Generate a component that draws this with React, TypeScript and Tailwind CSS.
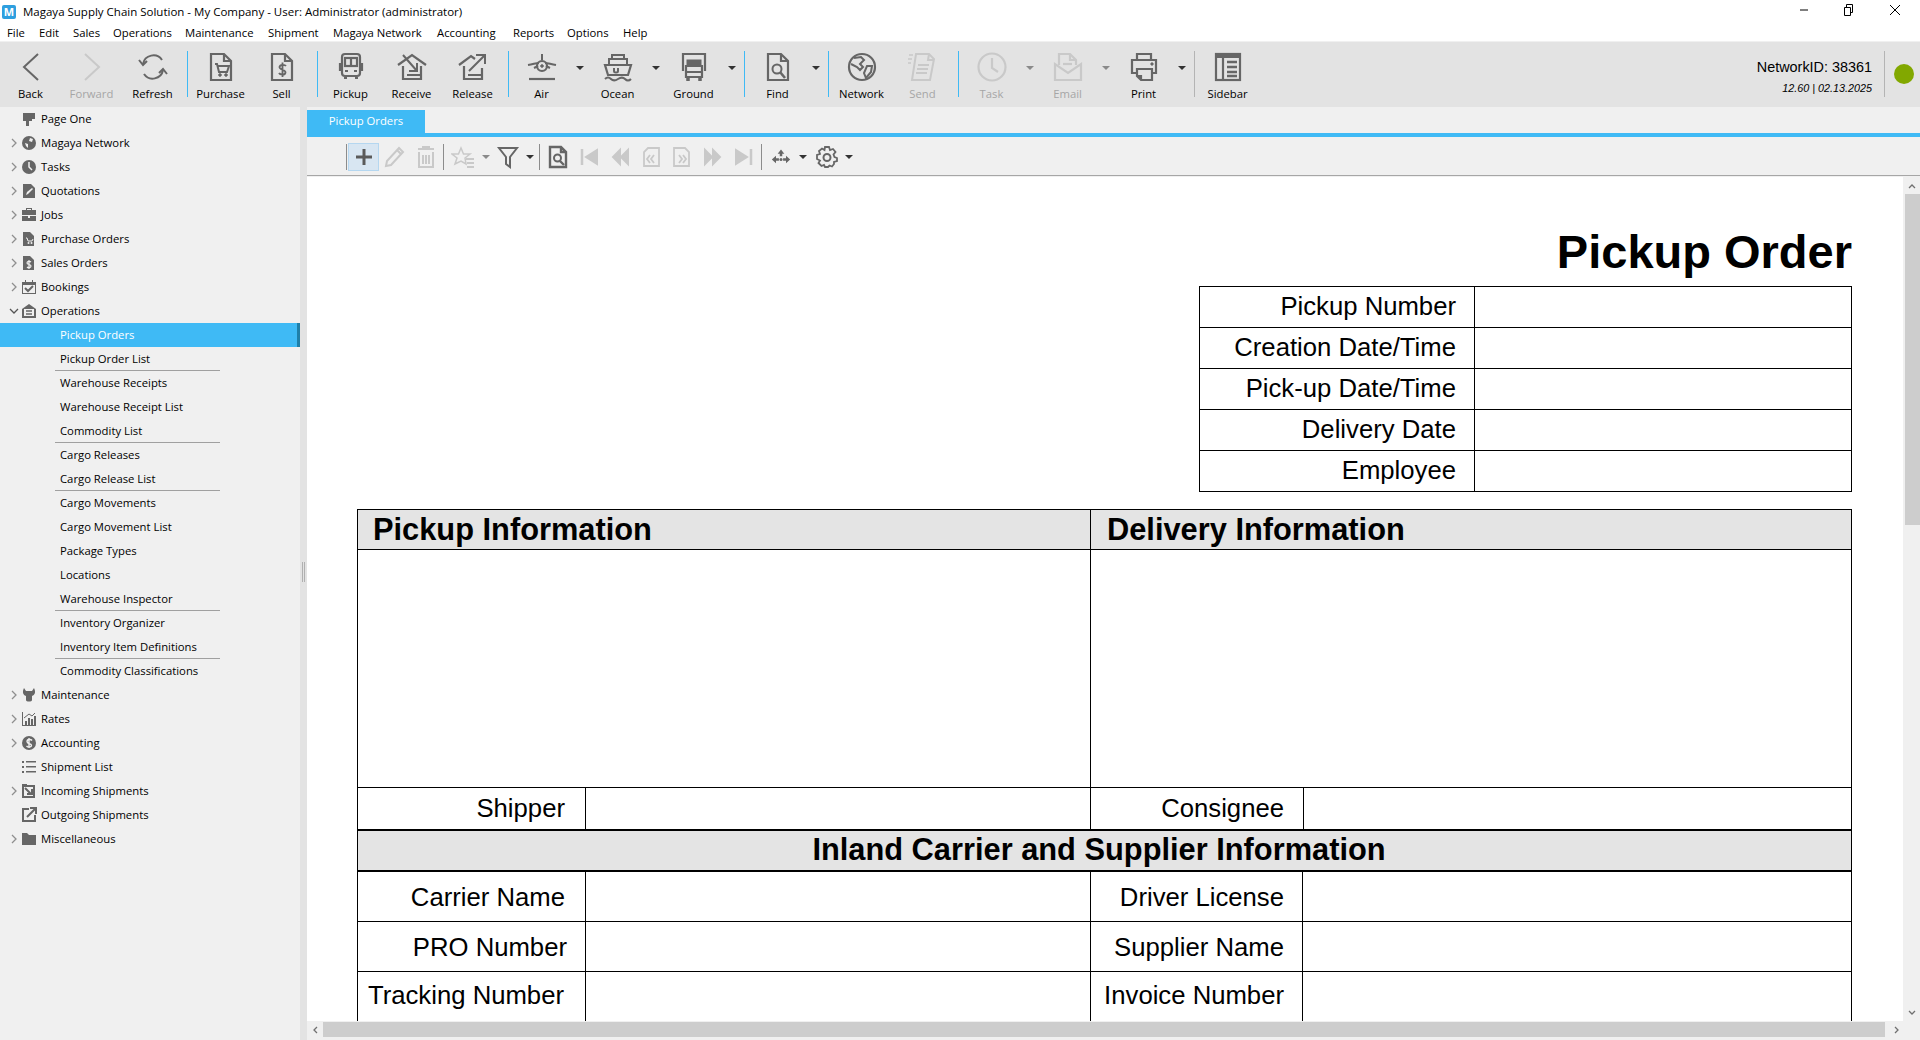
import React from 'react';

const ui = "font-['Open_Sans',sans-serif] text-[11.3px]";
const doc = "font-['Liberation_Sans',Arial,sans-serif]";

const G = '#666666';
const D = '#c9c9c9';

function I32({ c = G, children }: { c?: string; children: React.ReactNode }) {
  return (
    <svg width="32" height="32" viewBox="0 0 32 32" fill="none" stroke={c} strokeWidth="2.2">
      {children}
    </svg>
  );
}

const page = <path d="M6 3H19L26 10V29H6ZM19 3V10H26" />;

const toolIcons: Record<string, (c?: string) => React.ReactNode> = {
  back: c => <I32 c={c}><path d="M23 3L9 16L23 29" strokeWidth="2" /></I32>,
  forward: c => <I32 c={c}><path d="M9 3L23 16L9 29" strokeWidth="2" /></I32>,
  refresh: c => (
    <I32 c={c}>
      <path d="M6 13A10.5 10.5 0 0 1 25 9" strokeWidth="2" />
      <path d="M26 19A10.5 10.5 0 0 1 7 23" strokeWidth="2" />
      <path d="M2 9L6 14L10 10M22 22L26 18L30 23" strokeWidth="2" />
    </I32>
  ),
  purchase: c => (
    <I32 c={c}>
      {page}
      <path d="M10 13H12L14 21H22L24 15H13" strokeWidth="2" />
      <circle cx="15" cy="24" r="1.3" fill={c} strokeWidth="1" />
      <circle cx="21" cy="24" r="1.3" fill={c} strokeWidth="1" />
    </I32>
  ),
  sell: c => (
    <I32 c={c}>
      {page}
      <path d="M20 15C19 13.5 14 13 13.5 16S20 18.5 19.5 21.5 14 24 13 22M16.5 11.5V26" strokeWidth="1.8" />
    </I32>
  ),
  pickup: c => (
    <I32 c={c}>
      <rect x="7" y="3" width="18" height="22" rx="3" />
      <rect x="10" y="7" width="12" height="8" />
      <path d="M16 7V15M5 12V20M27 12V20M9 27H12M20 27H23" />
      <path d="M10 20H13M19 20H22" strokeWidth="2" />
    </I32>
  ),
  receive: c => (
    <I32 c={c}>
      <path d="M2 14L16 4L30 14M7 15V28H25V15M11 24H25" />
      <path d="M7 4L21 20M21 12V20H13" strokeWidth="2" />
    </I32>
  ),
  release: c => (
    <I32 c={c}>
      <path d="M2 14L14 5L18 8M7 15V28H25V17M11 24H25" />
      <path d="M12 20L27 5M19 4H28V13" strokeWidth="2" />
    </I32>
  ),
  air: c => (
    <I32 c={c}>
      <path d="M2 14C8 13 10 12 13 12M19 12C22 12 24 13 30 14M8 17L12 15M24 17L20 15" strokeWidth="2" />
      <path d="M16 3V9" strokeWidth="2" />
      <circle cx="16" cy="15" r="5" />
      <circle cx="16" cy="15" r="1.3" fill={c} strokeWidth="1" />
      <path d="M3 28H29" />
    </I32>
  ),
  ocean: c => (
    <I32 c={c}>
      <path d="M3 14H29L26 24H6Z" />
      <path d="M7 14V8H25V14M10 8V4H22V8M12 17V20C12 22 16 22 16 20V17" strokeWidth="2" />
      <path d="M3 28C5 26 7 26 9 28S13 30 16 28S21 26 23 28S27 30 29 28" strokeWidth="2" />
    </I32>
  ),
  ground: c => (
    <I32 c={c}>
      <path d="M5 20V3H27V20" />
      <rect x="9" y="9" width="14" height="5" fill={c} strokeWidth="1" />
      <path d="M8 15H24V26H8ZM8 21H24" />
      <path d="M10 26V30M22 26V30" strokeWidth="3.5" />
    </I32>
  ),
  find: c => (
    <I32 c={c}>
      {page}
      <circle cx="15" cy="18" r="4.5" strokeWidth="2" />
      <path d="M18 21L23 27" strokeWidth="2.6" />
    </I32>
  ),
  network: c => (
    <I32 c={c}>
      <circle cx="16" cy="16" r="13" />
      <path d="M8 7L15 6L18 9L14 13L17 16L14 19L11 16L5 13M21 15L26 15L25 21L20 27L18 22Z" strokeWidth="2" />
    </I32>
  ),
  send: c => (
    <I32 c={c}>
      <path d="M9 3H22L27 8L23 29H5ZM22 3L21 9H27M11 14H22M10 18H21M9 22H20" strokeWidth="2" />
      <path d="M2 4H6M1 8H5M1 12H4" strokeWidth="1.5" />
    </I32>
  ),
  task: c => (
    <I32 c={c}>
      <circle cx="16" cy="16" r="13.5" />
      <path d="M16 7V17L22 21" />
    </I32>
  ),
  email: c => (
    <I32 c={c}>
      <path d="M7 14V3H18L24 9V14M18 3V9H24M3 13V29H29V13L16 22Z" />
      <path d="M11 13H20" />
    </I32>
  ),
  print: c => (
    <I32 c={c}>
      <path d="M9 9V3H23V9M9 22H4V9H28V22H24" />
      <path d="M9 18H24V29H13L9 25ZM13 29V25H9" />
      <circle cx="24" cy="13" r="1.2" fill={c} strokeWidth="1" />
    </I32>
  ),
  sidebar: c => (
    <I32 c={c}>
      <rect x="4" y="3" width="24" height="26" />
      <path d="M4 5H28" strokeWidth="4" />
      <path d="M11 7V29" />
      <path d="M15 11H25M15 16H25M15 21H25M15 25H25" strokeWidth="2.5" />
    </I32>
  ),
};

type ToolItem =
  | { kind: 'btn'; icon: string; label: string; off?: boolean; caret?: boolean }
  | { kind: 'sep'; gray?: boolean; first?: boolean };

const tools: ToolItem[] = [
  { kind: 'btn', icon: 'back', label: 'Back' },
  { kind: 'btn', icon: 'forward', label: 'Forward', off: true },
  { kind: 'btn', icon: 'refresh', label: 'Refresh' },
  { kind: 'sep', first: true },
  { kind: 'btn', icon: 'purchase', label: 'Purchase' },
  { kind: 'btn', icon: 'sell', label: 'Sell' },
  { kind: 'sep' },
  { kind: 'btn', icon: 'pickup', label: 'Pickup' },
  { kind: 'btn', icon: 'receive', label: 'Receive' },
  { kind: 'btn', icon: 'release', label: 'Release' },
  { kind: 'sep' },
  { kind: 'btn', icon: 'air', label: 'Air', caret: true },
  { kind: 'btn', icon: 'ocean', label: 'Ocean', caret: true },
  { kind: 'btn', icon: 'ground', label: 'Ground', caret: true },
  { kind: 'sep' },
  { kind: 'btn', icon: 'find', label: 'Find', caret: true },
  { kind: 'sep' },
  { kind: 'btn', icon: 'network', label: 'Network' },
  { kind: 'btn', icon: 'send', label: 'Send', off: true },
  { kind: 'sep' },
  { kind: 'btn', icon: 'task', label: 'Task', off: true, caret: true },
  { kind: 'btn', icon: 'email', label: 'Email', off: true, caret: true },
  { kind: 'btn', icon: 'print', label: 'Print', caret: true },
  { kind: 'sep', gray: true },
  { kind: 'btn', icon: 'sidebar', label: 'Sidebar' },
];

function Caret({ off }: { off?: boolean }) {
  return (
    <span
      className={
        'h-0 w-0 border-x-[4px] border-t-[4px] border-x-transparent ' +
        (off ? 'border-t-[#8a8a8a]' : 'border-t-[#333333]')
      }
    />
  );
}

function Toolbar() {
  return (
    <div className={`flex h-[65px] items-start bg-[#e3e3e3] ${ui}`}>
      {tools.map((t, i) =>
        t.kind === 'sep' ? (
          <div
            key={i}
            className={
              'mt-[9px] mr-[2px] h-[46px] w-px ' +
              (t.first ? 'ml-[4px] ' : 'ml-[5px] ') +
              (t.gray ? 'bg-[#b4b4b4]' : 'bg-[#3fbaf5]')
            }
          />
        ) : (
          <div key={i} className="flex">
            <div className="flex w-[61px] flex-col items-center pt-[9px]">
              <div className="h-[32px]">{toolIcons[t.icon](t.off ? D : G)}</div>
              <span className={'leading-[22px] ' + (t.off ? 'text-[#a6a6a6]' : 'text-black')}>{t.label}</span>
            </div>
            {t.caret && (
              <div className="flex h-[50px] w-[15px] items-center justify-center pt-[1px]">
                <Caret off={t.off} />
              </div>
            )}
          </div>
        ),
      )}
      <div className="ml-auto flex h-full">
        <div className="flex flex-col items-end pr-[12px] pt-[15px] text-black">
          <span className="font-['Liberation_Sans',sans-serif] text-[14.4px] leading-[20px]">NetworkID: 38361</span>
          <span className="mt-[4px] font-['Liberation_Sans',sans-serif] text-[10.8px] italic leading-[14px]">
            12.60 | 02.13.2025
          </span>
        </div>
        <div className="mt-[9px] h-[46px] w-px bg-[#b4b4b4]" />
        <div className="ml-[9px] mr-[6px] mt-[22px] h-[20px] w-[20px] rounded-full bg-[#82a800]" />
      </div>
    </div>
  );
}

const menus = [
  ['File', 'w-[32px]'],
  ['Edit', 'w-[34px]'],
  ['Sales', 'w-[40px]'],
  ['Operations', 'w-[72px]'],
  ['Maintenance', 'w-[83px]'],
  ['Shipment', 'w-[65px]'],
  ['Magaya Network', 'w-[104px]'],
  ['Accounting', 'w-[76px]'],
  ['Reports', 'w-[54px]'],
  ['Options', 'w-[56px]'],
  ['Help', 'w-[40px]'],
];

function S16({ children }: { children: React.ReactNode }) {
  return (
    <svg width="16" height="16" viewBox="0 0 16 16" fill="#666666" stroke="none">
      {children}
    </svg>
  );
}

const sideIcons: Record<string, React.ReactNode> = {
  page: <S16><path d="M2 2H14V8H11V10H8V15H5V10H2Z" /></S16>,
  globe: <S16><circle cx="8" cy="8" r="7" /><path d="M9 3L12 4L11 7L8 6ZM4 8L7 9L7 13L5 11Z" fill="#f0f0f0" /></S16>,
  clock: <S16><circle cx="8" cy="8" r="7" /><path d="M8 3V8L11 11" fill="none" stroke="#f0f0f0" strokeWidth="1.5" /></S16>,
  quote: <S16><path d="M2 1H10L14 5V15H2Z" /><path d="M5 12L6 9L11 5L12 6L7 11Z" fill="#f0f0f0" /></S16>,
  jobs: <S16><path d="M5 3V1H11V3H15V8H1V3ZM6 3H10V2H6ZM1 9H7V11H9V9H15V14H1Z" /></S16>,
  cart: <S16><path d="M2 1H9L13 5V15H2Z" /><path d="M5 7H6L7 10H11L12 8" fill="none" stroke="#f0f0f0" /><circle cx="7.5" cy="12" r="1" fill="#f0f0f0" /><circle cx="10.5" cy="12" r="1" fill="#f0f0f0" /></S16>,
  dollarDoc: <S16><path d="M2 1H9L13 5V15H2Z" /><path d="M10 7C9 6 6 6 6 8S10 9 10 11S7 13 6 12M8 5V14" fill="none" stroke="#f0f0f0" strokeWidth="1.2" /></S16>,
  calendar: <S16><path d="M1 3H4V1H5V3H11V1H12V3H15V15H1Z" /><path d="M2 6H14V14H2Z" fill="#f0f0f0" /><path d="M4 9L7 12L12 7" fill="none" stroke="#666666" strokeWidth="2" /></S16>,
  ops: <S16><path d="M1 6L8 1L15 6V15H1Z" /><path d="M3 6H13V13H3Z" fill="#f0f0f0" /><path d="M5 8H11M5 11H11" stroke="#666666" strokeWidth="1.5" /></S16>,
  wrench: <S16><path d="M3 1C1 5 2 8 5 9V13C5 15 11 15 11 13V9C14 8 15 5 13 1L11 4H5Z" /></S16>,
  rates: <S16><path d="M1 1V15H15V14H2V1Z" /><path d="M4 10H6V14H4ZM7 7H9V14H7ZM10 8H12V14H10ZM13 5H15V14H13Z" /><path d="M3 7L8 3L11 5L14 2" fill="none" stroke="#666666" /></S16>,
  dollar: <S16><circle cx="8" cy="8" r="7" /><path d="M11 5.5C10 4 6 4 6 6.5S10.5 8.5 10.5 10.5S7 12.5 5.5 11M8 3V13" fill="none" stroke="#f0f0f0" strokeWidth="1.4" /></S16>,
  list: <S16><path d="M1 2H3V4H1ZM5 2H15V3.5H5ZM1 7H3V9H1ZM5 7H15V8.5H5ZM1 12H3V14H1ZM5 12H15V13.5H5Z" /></S16>,
  incoming: <S16><path d="M1 2H14V15H1Z" /><path d="M3 4H12V13H3Z" fill="#f0f0f0" /><path d="M4 5L10 11M11 6V11H6" fill="none" stroke="#666666" strokeWidth="2" /><path d="M1 1H6V3H1Z" /></S16>,
  outgoing: <S16><path d="M8 2H2V14H14V8" fill="none" stroke="#666666" strokeWidth="2" /><path d="M6 10L14 2M9 1H15V7" fill="none" stroke="#666666" strokeWidth="2" /></S16>,
  folder: <S16><path d="M1 2H6L8 4H15V14H1Z" /></S16>,
};

type SideRow = { label: string; icon?: string; arrow?: 'right' | 'down'; child?: boolean; line?: boolean; active?: boolean };

const sideRows: SideRow[] = [
  { label: 'Page One', icon: 'page' },
  { label: 'Magaya Network', icon: 'globe', arrow: 'right' },
  { label: 'Tasks', icon: 'clock', arrow: 'right' },
  { label: 'Quotations', icon: 'quote', arrow: 'right' },
  { label: 'Jobs', icon: 'jobs', arrow: 'right' },
  { label: 'Purchase Orders', icon: 'cart', arrow: 'right' },
  { label: 'Sales Orders', icon: 'dollarDoc', arrow: 'right' },
  { label: 'Bookings', icon: 'calendar', arrow: 'right' },
  { label: 'Operations', icon: 'ops', arrow: 'down' },
  { label: 'Pickup Orders', child: true, active: true },
  { label: 'Pickup Order List', child: true, line: true },
  { label: 'Warehouse Receipts', child: true },
  { label: 'Warehouse Receipt List', child: true },
  { label: 'Commodity List', child: true, line: true },
  { label: 'Cargo Releases', child: true },
  { label: 'Cargo Release List', child: true, line: true },
  { label: 'Cargo Movements', child: true },
  { label: 'Cargo Movement List', child: true },
  { label: 'Package Types', child: true },
  { label: 'Locations', child: true },
  { label: 'Warehouse Inspector', child: true, line: true },
  { label: 'Inventory Organizer', child: true },
  { label: 'Inventory Item Definitions', child: true, line: true },
  { label: 'Commodity Classifications', child: true },
  { label: 'Maintenance', icon: 'wrench', arrow: 'right' },
  { label: 'Rates', icon: 'rates', arrow: 'right' },
  { label: 'Accounting', icon: 'dollar', arrow: 'right' },
  { label: 'Shipment List', icon: 'list' },
  { label: 'Incoming Shipments', icon: 'incoming', arrow: 'right' },
  { label: 'Outgoing Shipments', icon: 'outgoing' },
  { label: 'Miscellaneous', icon: 'folder', arrow: 'right' },
];

function Sidebar() {
  return (
    <div className={`w-[300px] shrink-0 bg-[#f0f0f0] text-black ${ui}`}>
      {sideRows.map(r => (
        <div
          key={r.label}
          className={
            'relative flex h-[24px] items-center ' +
            (r.active ? 'border-r-[3px] border-[#1f7fa8] bg-[#3fbaf5] text-white' : '')
          }
        >
          {r.child ? (
            <span className="pl-[60px]">{r.label}</span>
          ) : (
            <>
              <span className="flex w-[21px] justify-center pl-[7px]">
                {r.arrow === 'right' && (
                  <svg width="8" height="10" viewBox="0 0 8 10" fill="none" stroke="#8f8f8f" strokeWidth="1.3">
                    <path d="M2 1L6 5L2 9" />
                  </svg>
                )}
                {r.arrow === 'down' && (
                  <svg width="10" height="8" viewBox="0 0 10 8" fill="none" stroke="#555555" strokeWidth="1.3">
                    <path d="M1 2L5 6L9 2" />
                  </svg>
                )}
              </span>
              <span className="flex w-[20px] justify-start">{r.icon && sideIcons[r.icon]}</span>
              <span>{r.label}</span>
            </>
          )}
          {r.line && <div className="absolute bottom-0 left-[55px] h-px w-[165px] bg-[#a0a0a0]" />}
        </div>
      ))}
    </div>
  );
}

function S24({ c = G, children }: { c?: string; children: React.ReactNode }) {
  return (
    <svg width="24" height="24" viewBox="0 0 24 24" fill="none" stroke={c} strokeWidth="2">
      {children}
    </svg>
  );
}

function SubSep({ m }: { m: string }) {
  return <div className={`${m} h-[26px] w-px bg-[#8c8c8c]`} />;
}

function Sub({ w = 'w-[31px]', children }: { w?: string; children: React.ReactNode }) {
  return <div className={`flex h-[28px] ${w} items-center justify-center`}>{children}</div>;
}

function SubToolbar() {
  return (
    <div className="flex h-[38px] items-center bg-[#f0f0f0] pl-[38px] pt-[2px]">
      <SubSep m="mx-[1px]" />
      <div className="flex h-[28px] w-[31px] items-center justify-center border border-[#b5d7f0] bg-[#d8e6f2]">
        <svg width="20" height="20" viewBox="0 0 20 20" fill="none" stroke="#5a5a5a" strokeWidth="3">
          <path d="M10 2V18M2 10H18" />
        </svg>
      </div>
      <Sub>
        <S24 c={D}><path d="M3 21L4 16L16 3L20 7L8 20ZM14 5L18 9" /></S24>
      </Sub>
      <Sub>
        <S24 c={D}><path d="M5 7V22H19V7M4 4H20M9 4V2H15V4M9 10V19M12 10V19M15 10V19" /></S24>
      </Sub>
      <SubSep m="mx-[2px]" />
      <Sub w="w-[34px]">
        <S24 c={D}><path d="M10 3L12.5 9H19L14 13L15 19L10 16L4 19L6 13L1 9H7.5Z" strokeWidth="1.5" /><path d="M15 14H23M16 18H23M16 22H23" /></S24>
      </Sub>
      <Sub w="w-[11px]"><Caret off /></Sub>
      <Sub w="w-[34px]">
        <S24><path d="M3 3H21L14 12V22L10 19V12Z" /></S24>
      </Sub>
      <Sub w="w-[10px]"><Caret /></Sub>
      <SubSep m="ml-[4px] mr-[2px]" />
      <Sub>
        <S24><path d="M4 2H15L20 7V22H4ZM15 2V7H20" strokeWidth="2.4" /><circle cx="11.5" cy="13" r="3.5" /><path d="M14 16L18 20" strokeWidth="2.4" /></S24>
      </Sub>
      <Sub>
        <S24 c={D}><path d="M5 4V20" strokeWidth="2.5" /><path d="M20 5V19L9 12Z" fill={D} /></S24>
      </Sub>
      <Sub>
        <S24 c={D}><path d="M12 5V19L5 12ZM20 5V19L13 12Z" fill={D} /></S24>
      </Sub>
      <Sub>
        <S24 c={D}><path d="M9 3H20V21H5V7ZM11 10L8 14L11 18M15 10L12 14L15 18" strokeWidth="1.8" /></S24>
      </Sub>
      <Sub>
        <S24 c={D}><path d="M4 3H15L19 7V21H4ZM9 10L12 14L9 18M13 10L16 14L13 18" strokeWidth="1.8" /></S24>
      </Sub>
      <Sub>
        <S24 c={D}><path d="M4 5V19L11 12ZM12 5V19L19 12Z" fill={D} /></S24>
      </Sub>
      <Sub>
        <S24 c={D}><path d="M19 4V20" strokeWidth="2.5" /><path d="M4 5V19L15 12Z" fill={D} /></S24>
      </Sub>
      <SubSep m="ml-[2px] mr-[2px]" />
      <Sub w="w-[34px]">
        <svg width="20" height="20" viewBox="0 0 24 24" fill={G}>
          <path d="M12 3L16 8H13.5V11H10.5V8H8ZM1 15L6 10.5V13.5H9.5V16.5H6V19.5ZM23 15L18 10.5V13.5H14.5V16.5H18V19.5Z" />
          <circle cx="12" cy="15" r="1.8" />
        </svg>
      </Sub>
      <Sub w="w-[10px]"><Caret /></Sub>
      <Sub w="w-[38px]">
        <S24>
          <path d="M10 2H14L15 5L18 4L20.5 7L18.5 9.5L19.5 12L22 13V16L19 17L19 19L17 21.5L14.5 20.5L13 22H10L9 20L6.5 21L3.5 18L5 15.5L2 14V10L5 9L4 6L7 3.5L9.5 5Z" strokeWidth="1.8" />
          <circle cx="12" cy="12.5" r="3.5" />
        </S24>
      </Sub>
      <Sub w="w-[6px]"><Caret /></Sub>
    </div>
  );
}

function TopRow({ label }: { label: string }) {
  return (
    <div className="flex h-[41px] border-b border-black">
      <div className="flex w-[275px] items-center justify-end border-r border-black pb-[2px] pr-[18px]">{label}</div>
      <div className="flex-1" />
    </div>
  );
}

function Half({ label, labelW, border, pr, extra = '' }: { label: string; labelW: string; border?: boolean; pr: string; extra?: string }) {
  return (
    <div className={`flex ${border ? 'w-[733px] border-r border-black' : 'flex-1'}`}>
      <div className={`flex ${labelW} items-center justify-end whitespace-nowrap border-r border-black ${pr} ${extra}`}>{label}</div>
      <div className="flex-1" />
    </div>
  );
}

function FormRow({ left, right, h, pl, extra }: { left: string; right: string; h: string; pl: string; extra: string }) {
  return (
    <div className={`flex ${h} border-b border-black`}>
      <Half label={left} labelW="w-[228px]" border pr={pl} extra={extra} />
      <Half label={right} labelW="w-[212px]" pr="pr-[18px]" extra={extra} />
    </div>
  );
}

function Document() {
  return (
    <div className={`h-full w-[1545px] pl-[50px] pt-[51px] text-[25.7px] text-black ${doc}`}>
      <div className="w-[1495px]">
        <div className="h-[47px] text-right text-[47px] font-bold leading-[47px]">Pickup Order</div>
        <div className="ml-auto mt-[11px] w-[653px] border-x border-t border-black">
          {['Pickup Number', 'Creation Date/Time', 'Pick-up Date/Time', 'Delivery Date', 'Employee'].map(l => (
            <TopRow key={l} label={l} />
          ))}
        </div>
        <div className="mt-[17px] border-x border-t border-black">
          <div className="flex h-[40px] border-b border-black bg-[#e4e4e4] text-[30.8px] font-bold leading-[39px]">
            <div className="w-[733px] border-r border-black pl-[15px]">Pickup Information</div>
            <div className="pl-[16px]">Delivery Information</div>
          </div>
          <div className="flex h-[238px] border-b border-black">
            <div className="w-[733px] border-r border-black" />
          </div>
          <div className="flex h-[41px]">
            <Half label="Shipper" labelW="w-[228px]" border pr="pr-[20px]" />
            <Half label="Consignee" labelW="w-[213px]" pr="pr-[19px]" />
          </div>
          <div className="flex h-[43px] items-center justify-center border-y-2 border-black bg-[#e4e4e4] pr-[11px] text-[30.8px] font-bold">
            Inland Carrier and Supplier Information
          </div>
          <FormRow left="Carrier Name" right="Driver License" h="h-[50px]" pl="pr-[20px]" extra="pt-[1px]" />
          <FormRow left="PRO Number" right="Supplier Name" h="h-[50px]" pl="pr-[18px]" extra="pt-[1px]" />
          <FormRow left="Tracking Number" right="Invoice Number" h="h-[56px]" pl="pr-[21px]" extra="pb-[8px]" />
        </div>
      </div>
    </div>
  );
}

export default function App() {
  return (
    <div className="flex h-[1040px] w-full flex-col overflow-hidden bg-white">
      <div className={`flex h-[23px] items-center text-black ${ui}`}>
        <div className="ml-[2px] flex h-[14px] w-[14px] items-center justify-center rounded-[2px] bg-[#2e9fdf] text-[11px] font-bold leading-none text-white">
          M
        </div>
        <span className="ml-[7px] text-[11.5px]">Magaya Supply Chain Solution - My Company - User: Administrator (administrator)</span>
        <div className="ml-auto flex items-center pb-[3px] pr-[19px]">
          <svg width="8" height="2" viewBox="0 0 8 2" className="mr-[35px]"><path d="M0 1H8" stroke="#000000" strokeWidth="1" /></svg>
          <svg width="10" height="12" viewBox="0 0 10 12" fill="none" stroke="#000000" className="mr-[36px]">
            <path d="M1.5 3.5H7.5V11.5H1.5ZM3.5 3.5V0.5H9.5V8.5H7.5" />
          </svg>
          <svg width="12" height="12" viewBox="0 0 12 12" fill="none" stroke="#000000"><path d="M1 1L11 11M11 1L1 11" /></svg>
        </div>
      </div>
      <div className={`flex h-[18px] items-center pl-[7px] pt-[2px] text-black ${ui}`}>
        {menus.map(([m, w]) => (
          <span key={m} className={w}>{m}</span>
        ))}
      </div>
      <div className="h-px bg-[#f0f0f0]" />
      <Toolbar />
      <div className="flex min-h-0 flex-1">
        <Sidebar />
        <div className="flex w-[7px] shrink-0 items-start justify-center bg-[#e3e3e3] pt-[455px]">
          <div className="h-[20px] w-[3px] border-x border-[#b0b0b0]" />
        </div>
        <div className="flex min-w-0 flex-1 flex-col bg-[#f0f0f0]">
          <div className="h-[3px]" />
          <div className={`flex h-[23px] w-[118px] items-center justify-center bg-[#3fbaf5] text-white ${ui}`}>Pickup Orders</div>
          <div className="h-[4px] bg-[#3fbaf5]" />
          <SubToolbar />
          <div className="h-px bg-[#a6a6a6]" />
          <div className="h-px bg-[#f0f0f0]" />
          <div className="flex min-h-0 flex-1">
            <div className="min-w-0 flex-1 overflow-hidden bg-white">
              <Document />
            </div>
            <div className="flex w-[17px] flex-col items-center bg-[#f0f0f0]">
              <div className="flex h-[17px] items-center justify-center">
                <svg width="8" height="6" viewBox="0 0 8 6" fill="none" stroke="#707070" strokeWidth="1.3"><path d="M1 5L4 2L7 5" /></svg>
              </div>
              <div className="h-[331px] w-[15px] self-end bg-[#cdcdcd]" />
              <div className="flex-1" />
              <div className="flex h-[17px] items-center justify-center">
                <svg width="8" height="6" viewBox="0 0 8 6" fill="none" stroke="#707070" strokeWidth="1.3"><path d="M1 1L4 4L7 1" /></svg>
              </div>
            </div>
          </div>
          <div className="flex h-[19px] items-start pt-[1px]">
            <div className="flex h-[15px] w-[16px] items-center justify-center">
              <svg width="6" height="8" viewBox="0 0 6 8" fill="none" stroke="#707070" strokeWidth="1.3"><path d="M5 1L2 4L5 7" /></svg>
            </div>
            <div className="h-[15px] flex-1 bg-[#cdcdcd]" />
            <div className="flex h-[15px] w-[35px] items-center justify-center pr-[12px]">
              <svg width="6" height="8" viewBox="0 0 6 8" fill="none" stroke="#707070" strokeWidth="1.3"><path d="M1 1L4 4L1 7" /></svg>
            </div>
          </div>
        </div>
      </div>
    </div>
  );
}
